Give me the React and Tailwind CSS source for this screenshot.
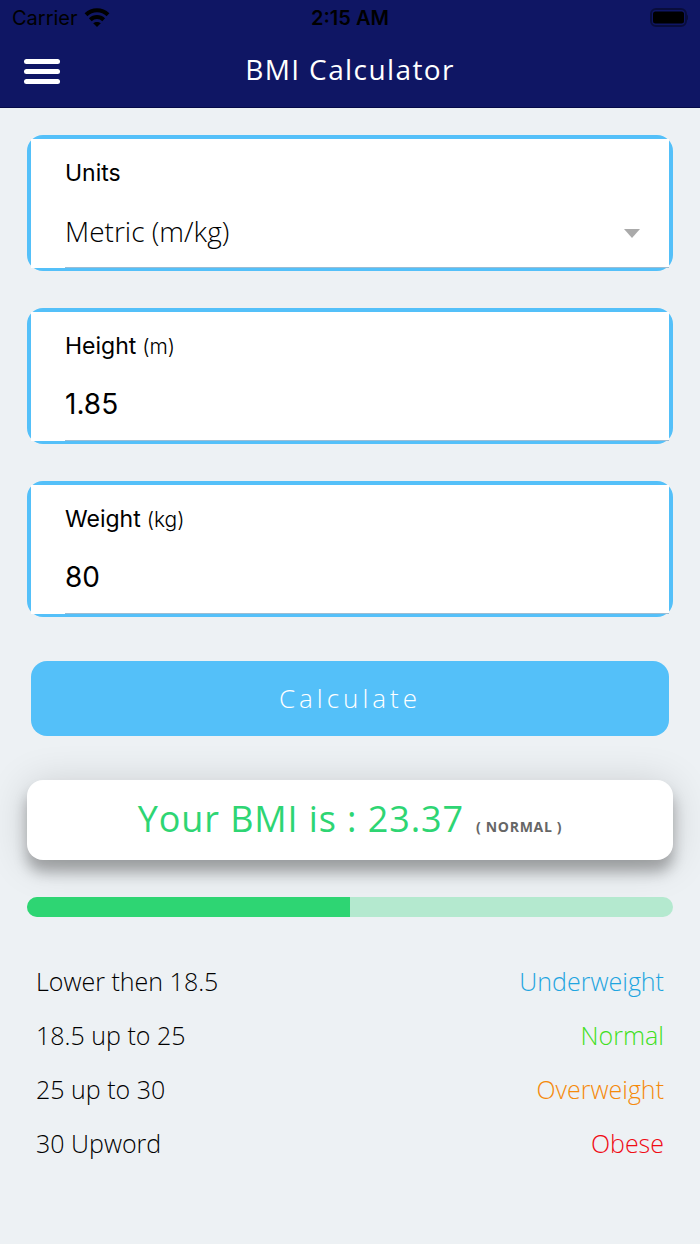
import React, { useState } from 'react';

const ranges = [
  { label: 'Lower then 18.5', status: 'Underweight', color: 'text-[#1fa5e0]' },
  { label: '18.5 up to 25', status: 'Normal', color: 'text-[#3fdf22]' },
  { label: '25 up to 30', status: 'Overweight', color: 'text-[#f58a0b]' },
  { label: '30 Upword', status: 'Obese', color: 'text-[#f00b14]' },
];

const getStatus = (bmi) => {
  if (bmi < 18.5) return 'Underweight';
  if (bmi < 25) return 'Normal';
  if (bmi < 30) return 'Overweight';
  return 'Obese';
};

const StatusBar = () => (
  <div className="grid grid-cols-3 items-center h-9 px-3 font-['Inter',sans-serif] text-xl text-black">
    <div className="flex items-center gap-1.5">
      <span>Carrier</span>
      <svg width="26" height="20" viewBox="0 0 26 20" fill="none" stroke="currentColor" strokeWidth="4">
        <path d="M2 6.7C8.2 0.7 17.8 0.7 24 6.7" />
        <path d="M6.3 11.7C10.2 8.1 15.8 8.1 19.7 11.7" />
        <path d="M13 19L9.2 15.3C11.4 13.4 14.6 13.4 16.8 15.3Z" fill="currentColor" stroke="none" />
      </svg>
    </div>
    <span className="text-center font-semibold">2:15 AM</span>
    <svg className="justify-self-end" width="40" height="20" viewBox="0 0 40 20">
      <rect x="3" y="1" width="35" height="17" rx="5" fill="none" stroke="#000" strokeOpacity="0.4" strokeWidth="2" />
      <rect x="5" y="3.5" width="31" height="12" rx="2.5" fill="#000" />
      <path d="M39.2 6.5v6c1.2-1 1.2-5 0-6z" fill="#000" fillOpacity="0.5" />
    </svg>
  </div>
);

const Header = () => (
  <header className="bg-[#0f1664] border-b border-[#050a48]">
    <StatusBar />
    <div className="grid grid-cols-[36px_1fr_36px] items-center h-[71px] px-6">
      <button type="button" aria-label="Menu" className="flex flex-col gap-[5px]">
        <span className="h-[5px] w-full rounded-full bg-white"></span>
        <span className="h-[5px] w-full rounded-full bg-white"></span>
        <span className="h-[5px] w-full rounded-full bg-white"></span>
      </button>
      <h1 className="pb-1.5 text-center text-[28px] leading-9 tracking-wider text-white">BMI Calculator</h1>
    </div>
  </header>
);

// The white panel is square on purpose, it sits on top of the rounded border
const Card = ({ id, label, unit, children }) => (
  <div className="rounded-2xl border-4 border-[#54c0f9]">
    <div className="bg-white pt-5 pl-[34px]">
      <label htmlFor={id} className="block font-['Inter',sans-serif] text-[23px] leading-7 text-black">
        {label}
        {unit && <span className="text-[21px] leading-none font-light"> ({unit})</span>}
      </label>
      <div className="mt-3 -mb-px grid items-center border-b border-[#9dbdd3]">{children}</div>
    </div>
  </div>
);

const inputStyle =
  "h-17 w-full bg-transparent pb-1 font-['Inter',sans-serif] text-[28px] text-black outline-none";

const App = () => {
  const [units, setUnits] = useState('metric');
  const [height, setHeight] = useState('1.85');
  const [weight, setWeight] = useState('80');
  const [bmi, setBmi] = useState(80 / (1.85 * 1.85));

  const calculate = (e) => {
    e.preventDefault();
    const factor = units === 'metric' ? 1 : 703;
    const result = (factor * Number(weight)) / (Number(height) * Number(height));
    if (Number.isFinite(result)) setBmi(result);
  };

  return (
    <div className="min-h-screen bg-[#edf1f4] font-['Open_Sans',sans-serif]">
      <Header />

      <main className="px-[27px] pt-[27px] pb-16">
        <form onSubmit={calculate} className="flex flex-col gap-[37px]">
          <Card id="units" label="Units">
            <select
              id="units"
              value={units}
              onChange={(e) => setUnits(e.target.value)}
              className="col-start-1 row-start-1 h-17 w-full appearance-none bg-transparent pb-1 text-[28px] font-light text-black outline-none"
            >
              <option value="metric">Metric (m/kg)</option>
              <option value="imperial">Imperial (in/lb)</option>
            </select>
            <svg
              className="col-start-1 row-start-1 mr-7 justify-self-end pointer-events-none"
              width="18"
              height="9"
              viewBox="0 0 18 9"
            >
              <path d="M1 0h16L9 9z" fill="#aaaaaa" />
            </svg>
          </Card>

          <Card id="height" label="Height" unit={units === 'metric' ? 'm' : 'in'}>
            <input
              id="height"
              inputMode="decimal"
              value={height}
              onChange={(e) => setHeight(e.target.value)}
              className={inputStyle}
            />
          </Card>

          <Card id="weight" label="Weight" unit={units === 'metric' ? 'kg' : 'lb'}>
            <input
              id="weight"
              inputMode="decimal"
              value={weight}
              onChange={(e) => setWeight(e.target.value)}
              className={inputStyle}
            />
          </Card>

          <button
            type="submit"
            className="mx-1 mt-[7px] h-[75px] rounded-2xl bg-[#54c0f9] text-[26px] font-light tracking-[4px] text-white"
          >
            Calculate
          </button>
        </form>

        {/* Result */}
        <div className="mt-11 flex h-20 items-baseline justify-center gap-3 rounded-2xl bg-white pt-[19px] shadow-[0_12px_14px_rgba(0,0,0,0.28),0_4px_40px_rgba(0,0,0,0.16)]">
          <span className="text-4xl tracking-wide text-[#2ed573]">Your BMI is : {bmi.toFixed(2)}</span>
          <span className="text-sm font-bold uppercase tracking-wider text-[#666666]">( {getStatus(bmi)} )</span>
        </div>

        <div className="relative mt-[37px] h-5 overflow-hidden rounded-full bg-[#b4e9cf]">
          <div className="h-full w-1/2 bg-[#2ed573]"></div>
        </div>

        {/* Ranges */}
        <table className="mt-[38px] w-full text-[25px] font-light">
          <tbody>
            {ranges.map((range) => (
              <tr key={range.status} className="h-[54px]">
                <th scope="row" className="pl-[9px] text-left font-light text-black">{range.label}</th>
                <td className={`pr-[9px] text-right ${range.color}`}>{range.status}</td>
              </tr>
            ))}
          </tbody>
        </table>
      </main>
    </div>
  );
};

export default App;
